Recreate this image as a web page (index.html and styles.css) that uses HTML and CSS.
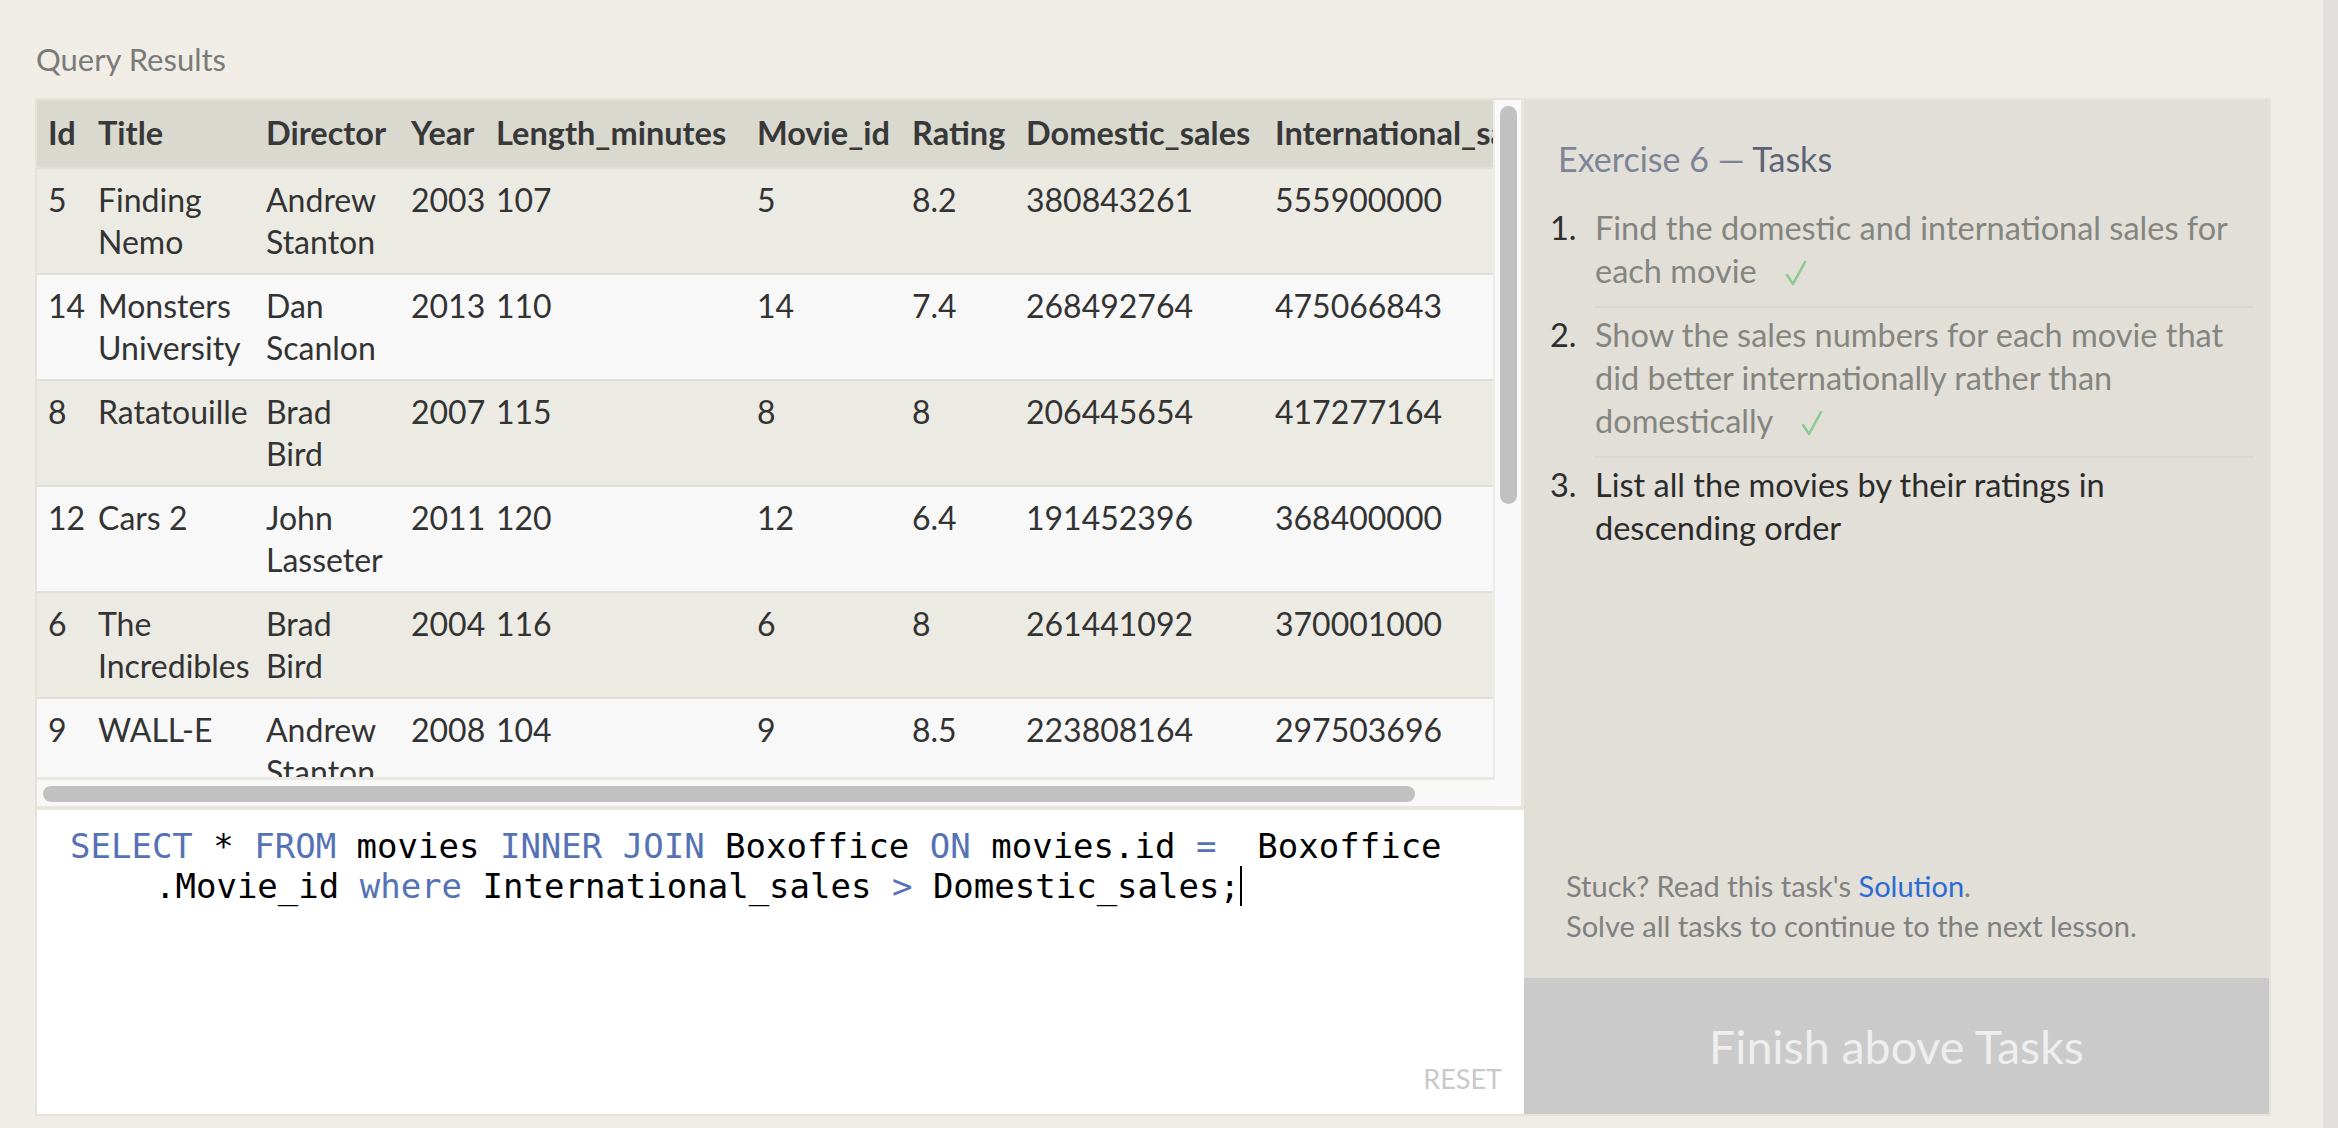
FILE: index.html
```html
<!DOCTYPE html>
<html lang="en">
<head>
<meta charset="utf-8">
<title>SQL Lesson — Exercise 6</title>
<link rel="stylesheet" href="styles.css">
</head>
<body>
<div class="page">
  <main class="lesson">
    <h2 class="results-label">Query Results</h2>
    <div class="workspace">
      <section class="left-col">
        <div class="results">
          <div class="viewport">
            <table class="grid">
              <thead>
                <tr>
                  <th class="c-id">Id</th>
                  <th class="c-title">Title</th>
                  <th class="c-dir">Director</th>
                  <th class="c-year">Year</th>
                  <th class="c-len">Length_minutes</th>
                  <th class="c-mid">Movie_id</th>
                  <th class="c-rat">Rating</th>
                  <th class="c-dom">Domestic_sales</th>
                  <th class="c-int">International_sales</th>
                </tr>
              </thead>
              <tbody>
                <tr><td>5</td><td>Finding Nemo</td><td>Andrew Stanton</td><td>2003</td><td>107</td><td>5</td><td>8.2</td><td>380843261</td><td>555900000</td></tr>
                <tr><td>14</td><td>Monsters University</td><td>Dan Scanlon</td><td>2013</td><td>110</td><td>14</td><td>7.4</td><td>268492764</td><td>475066843</td></tr>
                <tr><td>8</td><td>Ratatouille</td><td>Brad Bird</td><td>2007</td><td>115</td><td>8</td><td>8</td><td>206445654</td><td>417277164</td></tr>
                <tr><td>12</td><td>Cars 2</td><td>John Lasseter</td><td>2011</td><td>120</td><td>12</td><td>6.4</td><td>191452396</td><td>368400000</td></tr>
                <tr><td>6</td><td>The Incredibles</td><td>Brad Bird</td><td>2004</td><td>116</td><td>6</td><td>8</td><td>261441092</td><td>370001000</td></tr>
                <tr><td>9</td><td>WALL-E</td><td>Andrew Stanton</td><td>2008</td><td>104</td><td>9</td><td>8.5</td><td>223808164</td><td>297503696</td></tr>
              </tbody>
            </table>
          </div>
          <div class="vtrack"><div class="vthumb"></div></div>
          <div class="htrack"><div class="hthumb"></div></div>
        </div>
        <div class="editor">
          <div class="code-line"><span class="kw">SELECT</span> * <span class="kw">FROM</span> movies <span class="kw">INNER</span> <span class="kw">JOIN</span> Boxoffice <span class="kw">ON</span> movies.id <span class="kw">=</span>  Boxoffice</div>
          <div class="code-line wrapped">.Movie_id <span class="kw">where</span> International_sales <span class="kw">&gt;</span> Domestic_sales;<span class="cursor"></span></div>
          <span class="reset">RESET</span>
        </div>
      </section>
      <aside class="tasks-panel">
        <h3 class="tasks-title"><span class="ex">Exercise 6 —</span> <span class="tk">Tasks</span></h3>
        <ol class="task-list">
          <li class="task done"><span class="num">1.</span><div class="task-text">Find the domestic and international sales for each movie <svg class="check" viewBox="0 0 22 26" width="22" height="26"><path d="M2 15 L8 24 L20 2" fill="none" stroke="#8dca8d" stroke-width="2.6" stroke-linecap="round" stroke-linejoin="round"/></svg></div></li>
          <li class="task done"><span class="num">2.</span><div class="task-text">Show the sales numbers for each movie that did better internationally rather than domestically <svg class="check" viewBox="0 0 22 26" width="22" height="26"><path d="M2 15 L8 24 L20 2" fill="none" stroke="#8dca8d" stroke-width="2.6" stroke-linecap="round" stroke-linejoin="round"/></svg></div></li>
          <li class="task current"><span class="num">3.</span><div class="task-text">List all the movies by their ratings in descending order</div></li>
        </ol>
        <div class="help">
          <p>Stuck? Read this task's <a href="#" class="solution">Solution</a>.</p>
          <p>Solve all tasks to continue to the next lesson.</p>
        </div>
        <div class="finish">Finish above Tasks</div>
      </aside>
    </div>
  </main>
  <div class="edge"></div>
</div>
</body>
</html>
```

FILE: styles.css
```css
html, body {
  margin: 0;
  padding: 0;
}
body {
  background: #f0ede6;
  font-family: Lato, "Open Sans", sans-serif;
  color: #333;
  height: 1128px;
  overflow: hidden;
}
.page {
  display: flex;
  height: 1128px;
}
.lesson {
  flex: 1;
  padding-left: 35px;
}
.edge {
  width: 15px;
  background: #e2e0dc;
}
.results-label {
  margin: 39px 0 0 1px;
  height: 40px;
  line-height: 40px;
  font-size: 31px;
  font-weight: 400;
  color: #7a7a78;
}
.workspace {
  margin-top: 19px;
  width: 2236px;
  box-sizing: border-box;
  border: 2px solid #e4e2db;
  display: flex;
  height: 1018px;
}
.left-col {
  width: 1487px;
  display: flex;
  flex-direction: column;
}
.results {
  display: grid;
  grid-template-columns: 1458px 26px;
  grid-template-rows: 680px 26px;
  border-right: 3px solid #e7e5de;
  border-bottom: 4px solid #e7e5de;
  background: #f9f9f9;
}
.viewport {
  overflow: hidden;
  box-sizing: border-box;
  border-right: 2px solid #ebebe8;
  border-bottom: 3px solid #e9e8e3;
}
.grid {
  table-layout: fixed;
  width: 1538px;
  border-collapse: collapse;
  font-size: 32px;
  line-height: 42px;
  color: #333;
}
.grid th, .grid td {
  box-sizing: border-box;
  text-align: left;
  vertical-align: top;
  padding: 10px 10px 10px 11px;
}
.grid th {
  background: #dad9d0;
  font-weight: 700;
  font-size: 32.5px;
  color: #383838;
  padding-top: 12px;
  padding-bottom: 13px;
  white-space: nowrap;
}
.grid td {
  border-top: 2px solid #e0dfd9;
}
.grid tbody tr:nth-child(odd) td { background: #ebeae3; }
.grid tbody tr:nth-child(even) td { background: #f8f8f8; }
.c-id { width: 50px; }
.c-title { width: 168px; }
.c-dir { width: 145px; }
.c-year { width: 85px; }
.c-len { width: 261px; }
.c-mid { width: 155px; }
.c-rat { width: 114px; }
.c-dom { width: 249px; }
.c-int { width: 311px; }

.vtrack {
  grid-column: 2;
  grid-row: 1 / span 2;
  background: #f9f9f9;
}
.vthumb {
  margin: 6px 0 0 5px;
  width: 17px;
  height: 398px;
  border-radius: 9px;
  background: #c1c1c1;
}
.htrack {
  grid-column: 1;
  grid-row: 2;
  background: #f8f8f7;
  padding: 6px 0 0 6px;
  box-sizing: border-box;
}
.hthumb {
  width: 1372px;
  height: 16px;
  border-radius: 8px;
  background: #c1c1c1;
}

.editor {
  position: relative;
  flex: 1;
  background: #fff;
  padding: 16px 0 0 33px;
  font-family: "DejaVu Sans Mono", "Liberation Mono", monospace;
  font-size: 34px;
  line-height: 40px;
  color: #000;
}
.code-line {
  white-space: pre;
}
.code-line.wrapped {
  padding-left: 85px;
}
.kw { color: #5672b6; }
.cursor {
  display: inline-block;
  width: 2px;
  height: 40px;
  background: #000;
  vertical-align: top;
}
.reset {
  position: absolute;
  right: 22px;
  bottom: 20px;
  font-family: Lato, sans-serif;
  font-size: 27px;
  line-height: 30px;
  color: #c9c9c9;
}

.tasks-panel {
  width: 745px;
  background: #e1dfd8;
  display: flex;
  flex-direction: column;
}
.tasks-title {
  margin: 39px 0 0 34px;
  font-size: 34px;
  line-height: 40px;
  font-weight: 400;
}
.tasks-title .ex { color: #7d8497; }
.tasks-title .tk { color: #5c6375; }
.task-list {
  list-style: none;
  margin: 27px 16px 0 26px;
  padding: 0;
  font-size: 32.5px;
  line-height: 43px;
}
.task {
  display: flex;
}
.num {
  width: 45px;
  flex: none;
  color: #2e2e2e;
}
.task-text {
  flex: 1;
  padding: 0 0 14px;
  border-bottom: 2px solid #d8d6cd;
}
.task + .task .task-text {
  padding-top: 5px;
}
.task + .task .num {
  padding-top: 5px;
}
.task:last-child .task-text {
  border-bottom: none;
}
.task.done .task-text { color: #858580; }
.task.current .task-text { color: #2b2b2b; }
.check {
  margin-left: 20px;
  vertical-align: -3px;
}
.help {
  margin: auto 0 32px 42px;
  font-size: 29px;
  line-height: 40px;
  color: #808080;
}
.help p { margin: 0; }
.solution {
  color: #2b6bd3;
  text-decoration: none;
}
.finish {
  height: 136px;
  background: #cacaca;
  color: #eeeeee;
  font-size: 46.5px;
  line-height: 136px;
  text-align: center;
}
```
